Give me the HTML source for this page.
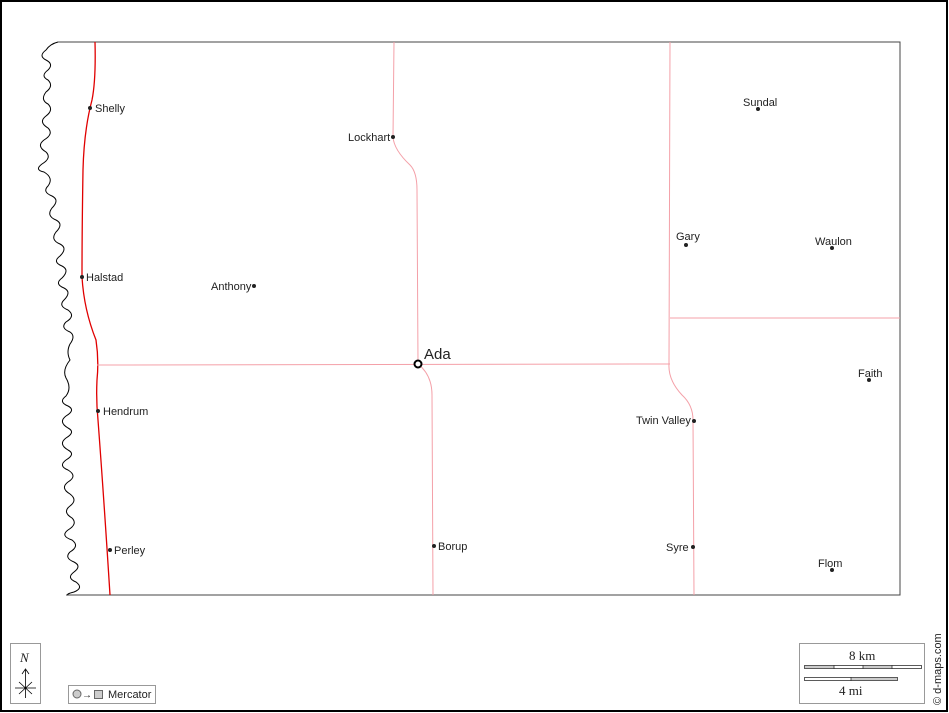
<!DOCTYPE html>
<html><head><meta charset="utf-8"><style>
html,body{margin:0;padding:0;background:#fff}
svg{display:block}
text{font-family:"Liberation Sans",sans-serif;font-size:11px;fill:#222}
</style></head><body>
<svg width="949" height="713" viewBox="0 0 949 713" xmlns="http://www.w3.org/2000/svg">
<rect x="1" y="1" width="946" height="710" fill="#fff" stroke="#000" stroke-width="2"/>
<!-- borders -->
<path d="M58 42 H900 V595 H66" fill="none" stroke="#444" stroke-width="1"/>
<!-- river -->
<path d="M58 42 Q50 44 46 50 Q38 56 46 60 Q54 64 48 70 Q40 76 48 80 Q54 86 46 92 Q40 100 48 104 Q54 110 46 116 Q38 122 48 128 Q54 134 44 140 Q36 146 46 152 Q52 158 42 164 Q34 170 44 172 Q54 178 48 186 Q42 192 52 196 Q60 200 52 208 Q46 216 56 220 Q64 224 56 232 Q50 240 60 244 Q68 248 60 256 Q52 262 62 266 Q70 270 62 278 Q54 284 64 288 Q72 292 64 300 Q58 306 68 310 Q76 316 66 322 Q60 328 70 332 Q76 336 70 344 Q66 352 70 360 Q62 370 66 378 Q72 388 66 396 Q58 402 68 406 Q76 410 66 416 Q58 422 68 428 Q76 432 66 438 Q58 444 68 450 Q76 454 66 460 Q58 466 68 470 Q78 476 68 482 Q60 488 70 494 Q78 500 70 506 Q62 512 72 518 Q78 524 68 530 Q60 536 72 540 Q80 546 70 552 Q64 558 74 562 Q82 566 74 572 Q66 578 76 582 Q84 588 74 592 Q66 594 68 595" fill="none" stroke="#000" stroke-width="1"/>
<!-- state line -->
<path d="M95 42 Q96 80 92 100 Q84 130 83 170 Q82 230 82 277 Q84 310 96 340 Q99 360 97 380 Q96 400 98 420 Q104 500 110 595" fill="none" stroke="#e00000" stroke-width="1.3"/>
<!-- county lines -->
<g fill="none" stroke="#f4a0a8" stroke-width="1">
<path d="M394 42 L393 137 Q394 150 410 165 Q417 172 417 190 L418 364"/>
<path d="M97 365 L670 364"/>
<path d="M418 364 Q432 375 432 395 L433 595"/>
<path d="M670 42 L669 364 Q668 380 682 395 Q693 405 693 420 L694 595"/>
<path d="M670 318 H900"/>
</g>
<!-- towns -->
<g fill="#222">
<circle cx="90" cy="108" r="2"/><circle cx="393" cy="137" r="2"/><circle cx="758" cy="109" r="2"/>
<circle cx="686" cy="245" r="2"/><circle cx="832" cy="248" r="2"/><circle cx="82" cy="277" r="2"/>
<circle cx="254" cy="286" r="2"/><circle cx="869" cy="380" r="2"/><circle cx="98" cy="411" r="2"/>
<circle cx="694" cy="421" r="2"/><circle cx="110" cy="550" r="2"/><circle cx="434" cy="546" r="2"/>
<circle cx="693" cy="547" r="2"/><circle cx="832" cy="570" r="2"/>
</g>
<circle cx="418" cy="364" r="3.5" fill="#fff" stroke="#000" stroke-width="2"/>
<text x="95" y="112">Shelly</text>
<text x="348" y="141">Lockhart</text>
<text x="743" y="106">Sundal</text>
<text x="676" y="240">Gary</text>
<text x="815" y="245">Waulon</text>
<text x="86" y="281">Halstad</text>
<text x="211" y="290">Anthony</text>
<text x="424" y="359" style="font-size:15px">Ada</text>
<text x="858" y="377">Faith</text>
<text x="103" y="415">Hendrum</text>
<text x="636" y="424">Twin Valley</text>
<text x="114" y="554">Perley</text>
<text x="438" y="550">Borup</text>
<text x="666" y="551">Syre</text>
<text x="818" y="567">Flom</text>
<!-- compass -->
<rect x="10.5" y="643.5" width="30" height="60" fill="#fff" stroke="#999"/>
<text x="20" y="662" style="font-family:'Liberation Serif',serif;font-style:italic;font-size:13px">N</text>
<path d="M25.5 670 V698 M22 674 L25.5 669 L29 674 M15 688 H36 M19 682 L32 694 M32 682 L19 694" stroke="#000" stroke-width="0.8" fill="none"/>
<!-- mercator -->
<rect x="68.5" y="685.5" width="87" height="18" fill="#fff" stroke="#999"/>
<circle cx="77" cy="694" r="4" fill="#ccc" stroke="#666"/>
<text x="82" y="698" style="font-size:10px">→</text>
<rect x="94.5" y="690.5" width="8" height="8" fill="#ccc" stroke="#666"/>
<text x="108" y="698">Mercator</text>
<!-- scale -->
<rect x="799.5" y="643.5" width="125" height="60" fill="#fff" stroke="#999"/>
<text x="849" y="660" style="font-family:'Liberation Serif',serif;font-size:13px">8 km</text>
<rect x="804.5" y="665.5" width="117" height="3" fill="#fff" stroke="#333" stroke-width="0.8"/>
<rect x="805" y="666" width="29" height="2" fill="#ccc"/><rect x="863" y="666" width="29" height="2" fill="#ccc"/>
<path d="M834 665v4M863 665v4M892 665v4" stroke="#333" stroke-width="0.8"/>
<rect x="804.5" y="677.5" width="93" height="3" fill="#fff" stroke="#333" stroke-width="0.8"/>
<rect x="851" y="678" width="46" height="2" fill="#ccc"/>
<path d="M851 677v4" stroke="#333" stroke-width="0.8"/>
<text x="839" y="695" style="font-family:'Liberation Serif',serif;font-size:13px">4 mi</text>
<text transform="translate(941 705) rotate(-90)" style="font-size:11px">© d-maps.com</text>
</svg>
</body></html>
